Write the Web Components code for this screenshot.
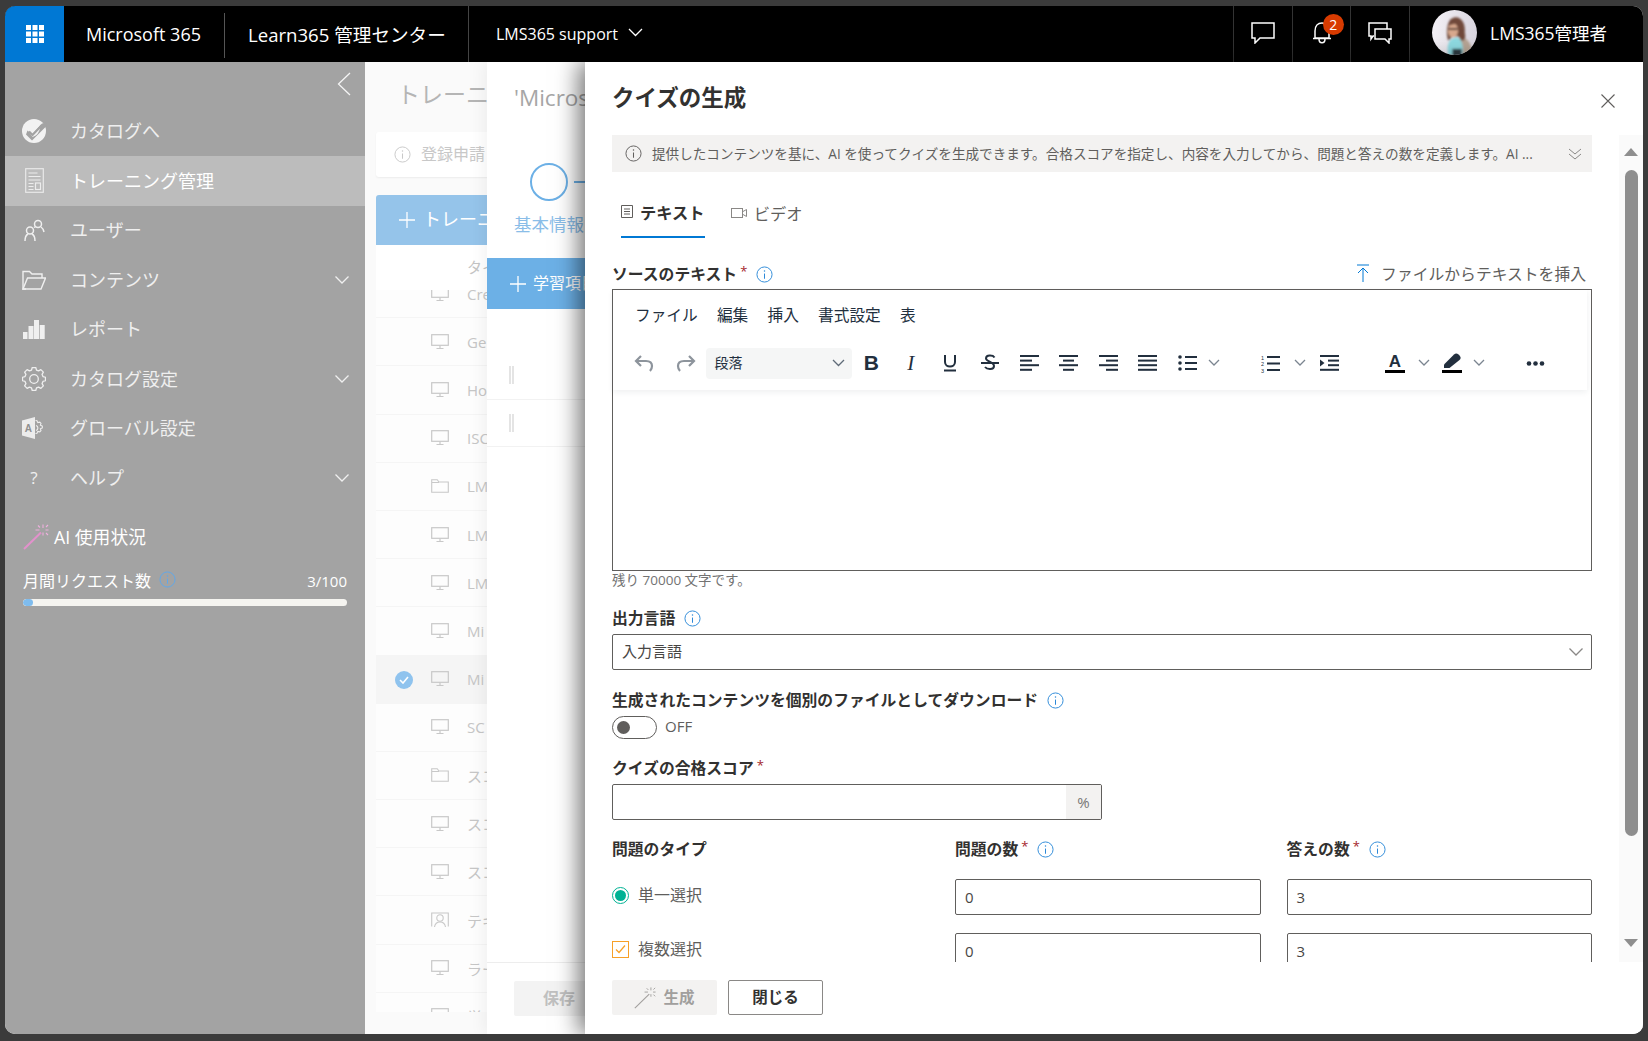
<!DOCTYPE html>
<html lang="ja"><head><meta charset="utf-8"><title>クイズの生成</title>
<style>
html,body{margin:0;padding:0;background:#3b3b3b}
body{font-family:"Open Sans","Noto Sans CJK JP",sans-serif}
</style></head><body>
<lms-app></lms-app>
<script>
const gear=(c,r1,r2,n)=>{let d='';for(let i=0;i<n;i++){const a=i*2*Math.PI/n,w=Math.PI/n*.55;const p=[[a-w*1.25,r1],[a-w*.7,r2],[a+w*.7,r2],[a+w*1.25,r1]];p.forEach((q,j)=>{d+=(i==0&&j==0?'M':'L')+(c+q[1]*Math.cos(q[0])).toFixed(2)+' '+(c+q[1]*Math.sin(q[0])).toFixed(2)})}return d+'Z'};
const svg=(w,h,vb,body,extra='')=>`<svg width="${w}" height="${h}" viewBox="${vb}" fill="none" stroke="currentColor" ${extra}>${body}</svg>`;
const ICONS={
 check:svg(26,26,'0 0 26 26',`<circle cx="13" cy="13" r="12" fill="#f2f2f2" stroke="none"/><path d="M6.500 12.500l4.500 4 10-11 5-1-1 4-14 14-6-6z" fill="#a3a3a3" stroke="none"/><path d="M8 14l3.500 3L19 9.500c-.5 4-2.500 8-7.500 9.500" fill="#f2f2f2" stroke="none"/><path d="M8 13.500l3.500 3.500L21 7" stroke="#a3a3a3" stroke-width="2.200"/>`),
 doc:svg(19,25,'0 0 19 25',`<rect x=".7" y=".7" width="17.600" height="23.600" stroke="#e8e8e8" stroke-width="1.200"/><path d="M3.500 5h9M3.500 8.500h12M3.500 12h12M3.500 15.500h5M3.500 18.500h5M3.500 21.500h5" stroke="#ececec" stroke-width="1.100"/><rect x="10.500" y="15" width="5" height="6.500" stroke="#ececec" stroke-width="1.200"/>`),
 users:svg(22,23,'0 0 22 23',`<g stroke="#f0f0f0" stroke-width="1.500"><circle cx="15" cy="5" r="3.500"/><circle cx="7" cy="11.500" r="3.500"/><path d="M18 8c1.500 1 2.500 2.500 3 5M11 8.500c.5-.5 1-.5 1.500-.5M2 22c0-3.500 1-6 3-7M12 22c0-3.500-1-6-3-7"/></g>`),
 folder:svg(24,20,'0 0 24 20',`<path d="M4 19H1V1.500h6.500L10 4h10v4" stroke-width="1.400"/><path d="M1 19L5.500 8h18L19 19z" stroke-width="1.400"/>`),
 bars:svg(22,20,'0 0 22 20',`<g fill="#f0f0f0" stroke="none"><rect x="0" y="13" width="4.500" height="7"/><rect x="5.500" y="7" width="5" height="13"/><rect x="11" y="1" width="5" height="19"/><rect x="16.700" y="6" width="5" height="14"/></g>`),
 gear:svg(24,24,'0 0 24 24',`<path d="${gear(12,9.300,11.600,8)}" stroke-width="1.300" stroke-linejoin="round"/><circle cx="12" cy="12" r="4.300" stroke-width="1.300"/>`),
 global:svg(24,22,'0 0 24 22',`<path d="M0 3.500L13 0v22L0 18.500z" fill="#ececec" stroke="none"/><text x="2.800" y="15" font-size="10" font-weight="700" fill="#8f8f8f" stroke="none" font-family="Liberation Sans">A</text><path d="M13.500 3.500l1.500.3.800 1.800 2-.5 1.200 1.200-.6 1.900 1.900.8v2l-1.900.8.600 1.900-1.200 1.200-2-.5-.8 1.800-1.500.3" stroke-width="1.100"/><path d="M14 8.500a2.600 2.600 0 0 1 0 5" stroke-width="1.100"/>`),
 help:`<span style="font:400 17px 'Open Sans',sans-serif;color:#f0f0f0">?</span>`,
 chev:svg(16,10,'0 0 16 10',`<path d="M1.500 1.500L8 8l6.500-6.500" stroke-width="1.300"/>`),
 wand:(c,s,w,sw=1.700)=>svg(w,w,'0 0 26 26',`<path d="M1 25L18 8.500" stroke="${c}" stroke-width="${sw}"/><path d="M20 .5v3.500M20 8.500v3M12.500 6h4M22.500 6h3M15 1.500l2 2M25 1l-2 2M23 9l2 2" stroke="${s}" stroke-width="1.100"/>`),
 info:(c='#2b88d8',s=17)=>svg(s,s,'0 0 18 18',`<circle cx="9" cy="9" r="8" stroke="${c}" stroke-width="1"/><path d="M9 8v5.500" stroke="${c}" stroke-width="1.100"/><circle cx="9" cy="5.300" r=".8" fill="${c}" stroke="none"/>`),
 pc:svg(18,16,'0 0 18 16',`<rect x=".7" y=".7" width="16.600" height="10.600" stroke-width="1.200"/><path d="M9 11.500v3M5.500 14.500h7" stroke-width="1.200"/>`),
 fold:svg(18,14,'0 0 18 14',`<path d="M.7 13.300V.7h5.500l1.800 2.300h9.300v10.300zM.7 3.500h7.300" stroke-width="1.100"/>`),
 person:svg(18,16,'0 0 18 16',`<path d="M3 1H.7v13.500M15 1h2.300v13.500M3 1h12" stroke-width="1.100"/><circle cx="9" cy="6" r="3.200" stroke-width="1.100"/><path d="M3.500 15c.5-3 2.500-5 5.500-5s5 2 5.500 5" stroke-width="1.100"/>`)
};
class Base extends HTMLElement{
 connectedCallback(){if(this.shadowRoot)return;this.attachShadow({mode:'open'}).innerHTML=this.render()}
 attr(n,d=''){return this.getAttribute(n)??d}
}
const d=(n,c)=>customElements.define(n,c);

class LmsApp extends Base{render(){return `<style>
:host{display:block;width:1648px;height:1041px;box-sizing:border-box;padding:6px 5px 7px 5px;background:#3b3b3b;font-family:"Open Sans","Noto Sans CJK JP",sans-serif}
.win{position:relative;width:100%;height:100%;border-radius:10px;overflow:hidden;display:flex;flex-direction:column;background:#fff}
.main{flex:1;min-height:0;display:flex}
</style><div class="win"><lms-topbar></lms-topbar><div class="main"><lms-sidenav></lms-sidenav><lms-training></lms-training></div><lms-wizard></lms-wizard><lms-quiz></lms-quiz></div>`}}

class LmsTopbar extends Base{render(){return `<style>
:host{display:flex;height:56px;background:#000;color:#fff;flex:none;font-size:18px;align-items:stretch}
.tile{width:59px;background:#0078d4;display:flex;align-items:center;justify-content:center}
.tile svg{display:block}
.it{display:flex;align-items:center;white-space:nowrap;box-sizing:border-box}
.b{width:161px;padding-left:22px;position:relative}
.b:after{content:"";position:absolute;right:0;top:7px;bottom:4px;width:1px;background:#555}
.l{width:244px;padding-left:23px;border-right:1px solid #444;font-size:18.600px;padding-bottom:2px}
.o{padding-left:27px;font-size:16px}
.o svg{margin-left:10px;margin-top:-3px}
.sp{flex:1}
.c{width:58.700px;border-left:1px solid #333;justify-content:center;position:relative;padding-bottom:3px}
.badge{position:absolute;left:30px;top:8px;width:21px;height:21px;border-radius:50%;background:#d83b01;font-size:14px;display:flex;align-items:center;justify-content:center;line-height:1}
.u{width:233.900px;border-left:1px solid #333;padding-left:22px;gap:13px;font-size:17.500px;padding-bottom:3px}
</style>
<div class="tile"><svg width="18" height="18" viewBox="0 0 18 18" fill="#fff"><rect width="5" height="5"/><rect x="6.500" width="5" height="5"/><rect x="13" width="5" height="5"/><rect y="6.500" width="5" height="5"/><rect x="6.500" y="6.500" width="5" height="5"/><rect x="13" y="6.500" width="5" height="5"/><rect y="13" width="5" height="5"/><rect x="6.500" y="13" width="5" height="5"/><rect x="13" y="13" width="5" height="5"/></svg></div>
<div class="it b">Microsoft 365</div><div class="it l">Learn365 管理センター</div>
<div class="it o">LMS365 support<svg width="15" height="9" viewBox="0 0 15 9" fill="none" stroke="#fff" stroke-width="1.300"><path d="M1 1l6.500 6.500L14 1"/></svg></div><div class="sp"></div>
<div class="it c"><svg width="24" height="22" viewBox="0 0 24 22" fill="none" stroke="#fff" stroke-width="1.500"><path d="M1 1h22v15H9l-5 5v-5H1z"/></svg></div>
<div class="it c"><svg width="20" height="23" viewBox="0 0 20 23" fill="none" stroke="#fff" stroke-width="1.500"><path d="M3 17V10c0-5 3-8 7-8s7 3 7 8v7zM1 17.500h18M7 18c0 5 6 5 6 0"/></svg><span class="badge">2</span></div>
<div class="it c"><svg width="24" height="22" viewBox="0 0 24 22" fill="none" stroke="#fff" stroke-width="1.500"><path d="M6 14H5l-2 3v-3H1V1h18v6"/><path d="M7 7h16v10h-2v4l-4-4H7z" fill="#000"/></svg></div>
<div class="it u"><svg width="45" height="45" viewBox="0 0 44 44"><defs><clipPath id="av"><circle cx="22" cy="22" r="22"/></clipPath><filter id="bl" x="-20%" y="-20%" width="140%" height="140%"><feGaussianBlur stdDeviation="1"/></filter><linearGradient id="ag" x1="0" y1="0" x2="1" y2="0"><stop offset="0" stop-color="#f4f1f6"/><stop offset="1" stop-color="#d9d5df"/></linearGradient></defs><g clip-path="url(#av)"><rect width="44" height="44" fill="url(#ag)"/><g filter="url(#bl)"><path d="M26 44V28c5-3 12 0 14 16z" fill="#b7a595"/><path d="M16 44c-2-8 0-16 7-17 6 0 8 8 7 17z" fill="#8fdbe3"/><path d="M16 30c-3-9-1-23 7-23 7 0 10 8 9 15 1 4 1 8-3 8l-3-4h-6z" fill="#714a3b"/><ellipse cx="20.500" cy="20" rx="5" ry="7" fill="#d9a98e"/><path d="M16 18.500h9" stroke="#2e2320" stroke-width="1.600"/><path d="M16 15c3 0 8-2 10-3l-2-3h-6z" fill="#714a3b"/><rect x="20" y="38" width="9" height="7" fill="#2f3a42"/></g></g></svg><span>LMS365管理者</span></div>`}}

class LmsNavItem extends Base{render(){const ic=ICONS[this.attr('icon')];return `<style>
:host{display:flex;align-items:center;height:49.500px;color:#efefef;font-size:18px;box-sizing:border-box;position:relative}
:host([active]){background:#bcbcbc;color:#fff}
.i{width:60px;margin-left:9px;display:flex;justify-content:center;flex:none;box-sizing:border-box;padding-right:20px}
.t{flex:1;margin-left:-4px;padding-bottom:2px}
.c{margin-right:15px;display:flex;color:#f0f0f0}
</style><span class="i">${ic}</span><span class="t"><slot></slot></span>${this.hasAttribute('chevron')?`<span class="c">${ICONS.chev}</span>`:''}`}}

class LmsSidenav extends Base{render(){return `<style>
:host{display:block;width:360px;flex:none;background:#a3a3a3;color:#fff}
.top{height:44.500px;display:flex;justify-content:flex-end;align-items:center;padding-right:14px;color:#f4f4f4}
.ai{display:flex;align-items:center;gap:5px;margin:19px 0 0 18px;font-size:17.800px;color:#fff;height:30px}
.ai span{padding-bottom:2px}
.m{display:flex;align-items:center;margin:16px 18px 0 18px;font-size:16px;color:#fff;height:24px}
.m span{margin-right:8px}.m b{margin-left:auto;font-weight:400;font-size:15px;padding-top:3px}
.bar{margin:7px 18px 0 18px;height:7px;border-radius:4px;background:#f5f4f0;overflow:hidden}
.bar i{display:block;width:10px;height:100%;background:#7fbcee;border-radius:4px}
svg{display:block}
</style><div class="top"><svg width="14" height="24" viewBox="0 0 14 24" fill="none" stroke="currentColor" stroke-width="1.300"><path d="M13 1L1.500 12 13 23"/></svg></div>
<lms-nav-item icon="check">カタログへ</lms-nav-item>
<lms-nav-item icon="doc" active>トレーニング管理</lms-nav-item>
<lms-nav-item icon="users">ユーザー</lms-nav-item>
<lms-nav-item icon="folder" chevron>コンテンツ</lms-nav-item>
<lms-nav-item icon="bars">レポート</lms-nav-item>
<lms-nav-item icon="gear" chevron>カタログ設定</lms-nav-item>
<lms-nav-item icon="global">グローバル設定</lms-nav-item>
<lms-nav-item icon="help" chevron>ヘルプ</lms-nav-item>
<div class="ai">${ICONS.wand('#e391cc','#eeb0dd',26,2)}<span>AI 使用状況</span></div>
<div class="m"><span>月間リクエスト数</span>${ICONS.info('#5ea8ec',17)}<b>3/100</b></div>
<div class="bar"><i></i></div>`}}

class LmsTraining extends Base{render(){
 const rows=[['pc','Cre'],['pc','Ge'],['pc','Ho'],['pc','ISC'],['fold','LM'],['pc','LM'],['pc','LM'],['pc','Mi'],['pc','Mi',1],['pc','SC'],['fold','スコ'],['pc','スコ'],['pc','スコ'],['person','テキ'],['pc','ラー'],['pc','学']];
 return `<style>
:host{display:block;flex:1;background:#fafafa;color:#bcbcbc;padding-left:11px;overflow:hidden;white-space:nowrap;box-sizing:border-box}
h1{font-size:23px;font-weight:400;margin:0;padding:19px 0 0 21px;height:50px;box-sizing:border-box;line-height:26px;color:#b5b5b5}
.card{height:45px;background:#fff;margin-top:20px;display:flex;align-items:center;padding-left:18px;gap:10px;font-size:16px;color:#c8c8c8;box-shadow:0 1px 2px rgba(0,0,0,.06);border-radius:3px 0 0 3px}
.card span{padding-bottom:4px}
.btn{height:50px;background:#95c4ea;margin-top:18px;color:#fff;display:flex;align-items:center;padding-left:23px;gap:8px;font-size:18px;border-radius:3px 0 0 0}
.btn svg{display:block}.btn span{padding-bottom:4px}
.head{height:45px;background:#fff;padding-left:91px;font-size:15px;color:#c4c4c4;line-height:44px}
.list{height:722px;overflow:hidden;background:#fff}
.in{margin-top:-20px}
.r{height:48.200px;box-sizing:border-box;border-bottom:1px solid #f5f5f5;display:flex;align-items:center;font-size:15px;position:relative;padding-left:55px;color:#c6c6c6;background:#fdfdfd}
.r.s{background:#f5f5f5}
.r span.ic{width:36px;display:flex;color:#c8c8c8}
.ck{position:absolute;left:19px;top:15px;width:18px;height:18px;border-radius:50%;background:#8fc3ee;display:flex;align-items:center;justify-content:center}
</style>
<h1>トレーニング管理</h1>
<div class="card">${ICONS.info('#c8c8c8',17)}<span>登録申請</span></div>
<div class="btn"><svg width="16" height="16" viewBox="0 0 16 16" stroke="#fff" stroke-width="1.300"><path d="M8 0v16M0 8h16"/></svg><span>トレーニング</span></div>
<div class="head">タイトル</div>
<div class="list"><div class="in">${rows.map(r=>`<div class="r ${r[2]?'s':''}">${r[2]?`<span class="ck"><svg width="10" height="8" viewBox="0 0 10 8" fill="none" stroke="#fff" stroke-width="1.600"><path d="M1 4l3 3 5-6"/></svg></span>`:''}<span class="ic">${ICONS[r[0]]}</span>${r[1]}</div>`).join('')}</div></div>`}}

class LmsWizard extends Base{render(){return `<style>
:host{position:absolute;left:482px;top:56px;bottom:0;width:200px;background:#fff;color:#aaa;display:flex;flex-direction:column;box-shadow:-4px 0 14px rgba(0,0,0,.05);white-space:nowrap;overflow:hidden}
h1{font-size:22.500px;font-weight:400;margin:0;padding:23px 0 0 27px;height:101px;box-sizing:border-box;color:#a6a6a6;line-height:26px;flex:none}
.st{display:flex;align-items:center;padding-left:43px;height:38px;flex:none}
.st i{display:block;width:34px;height:34px;border:2px solid #6cb0e6;border-radius:50%}
.st u{display:block;width:30px;height:2px;background:#6cb0e6;margin-left:6px}
.lb{padding-left:27px;font-size:17.500px;color:#8abde8;margin-top:11px;flex:none;line-height:24px}
.btn{height:51px;background:#6cb0e6;margin-top:22px;color:#fff;display:flex;align-items:center;padding-left:23px;gap:7px;font-size:16px;flex:none}
.btn span{padding-bottom:3px}
.h{height:47.500px;border-bottom:1px solid #f2f2f2;padding-left:22px;display:flex;align-items:center;flex:none;box-sizing:border-box}
.h:before{content:"";width:5px;height:18px;border-left:2px solid #e4e4e4;border-right:2px solid #e4e4e4;box-sizing:border-box}
.f1{height:43px;flex:none}
.sp{flex:1}
.f{height:72px;border-top:1px solid #ededed;padding:18px 0 0 27px;box-sizing:border-box;flex:none}
.f span{display:flex;width:120px;height:35px;background:#f3f3f3;color:#c0c0c0;font-weight:700;font-size:16px;align-items:center;padding:0 0 3px 29px;box-sizing:border-box;border-radius:2px}
</style><h1>'Microsoft</h1>
<div class="st"><i></i><u></u></div><div class="lb">基本情報</div>
<div class="btn"><svg width="16" height="16" viewBox="0 0 16 16" stroke="#fff" stroke-width="1.300"><path d="M8 0v16M0 8h16"/></svg><span>学習項目</span></div>
<div class="f1"></div><div class="h"></div><div class="h"></div><div class="sp"></div>
<div class="f"><span>保存</span></div>`}}

class LmsLabel extends Base{render(){return `<style>
:host{display:flex;align-items:center;height:24px;font-size:15.800px;font-weight:700;color:#323130;white-space:nowrap}
.s{color:#a4262c;font-size:13px;font-weight:400;margin-left:3px;align-self:flex-start;line-height:20px}
.i{display:flex;margin-left:9px;margin-top:2px}
</style><slot></slot>${this.hasAttribute('req')?'<span class="s">*</span>':''}${this.hasAttribute('info')?`<span class="i">${ICONS.info()}</span>`:''}`}}

class LmsInput extends Base{render(){return `<style>
:host{display:flex;height:36px;box-sizing:border-box;border:1px solid #605e5c;border-radius:2px;align-items:center;font-size:15px;color:#484644;background:#fff;overflow:hidden}
.v{flex:1;padding-left:9px}
:host([select]) .v{padding-bottom:4px}
.sf{width:35px;height:100%;background:#f3f2f1;color:#797775;display:flex;align-items:center;justify-content:center;font-size:15px}
.c{display:flex;margin-right:7px;color:#8a8886}
</style><span class="v"><slot></slot></span>${this.hasAttribute('suffix')?`<span class="sf">${this.attr('suffix')}</span>`:''}${this.hasAttribute('select')?`<span class="c">${ICONS.chev}</span>`:''}`}}

class LmsEditor extends Base{render(){
 const col='#222f3e';
 const lines=(a)=>`<svg width="19" height="16" viewBox="0 0 19 16" fill="${col}" stroke="none">${a.map((r,i)=>`<rect x="${r[0]}" y="${i*4.600}" width="${r[1]}" height="2"/>`).join('')}</svg>`;
 const chv=(m=0)=>`<span class="ch" style="margin-left:${m}px"><svg width="12" height="8" viewBox="0 0 12 8" fill="none" stroke="#7b8590" stroke-width="1.300"><path d="M1 1l5 5 5-5"/></svg></span>`;
 const b=(x,st='')=>`<span class="b" style="${st}">${x}</span>`;
 const ltr=(t,s,f='Liberation Sans')=>`<span style="font:${s} '${f}',sans-serif;color:${col}">${t}</span>`;
 return `<style>
:host{display:flex;flex-direction:column;height:282px;box-sizing:border-box;border:1px solid #605e5c;background:#fff}
.top{height:100px;box-shadow:0 2px 6px rgba(34,47,62,.08);display:block;flex:none;margin-right:4px}
.mb{display:flex;height:54px;box-sizing:border-box;align-items:center;gap:19.200px;padding:0 0 6px 22px;font-size:15.700px;color:#222f3e}
.tb{display:flex;align-items:center;height:38px;padding-left:11px}
.b{width:39.500px;height:38px;display:flex;align-items:center;justify-content:center;flex:none}
.sel{width:146px;height:31px;background:#f5f6f6;border-radius:4px;display:flex;align-items:center;justify-content:space-between;padding:0 7px 3px 9px;box-sizing:border-box;font-size:14px;color:#222f3e;flex:none}
.sel svg{margin-top:3px}
.ch{width:14px;display:flex;justify-content:center;flex:none}
</style><div class="top"><div class="mb"><span>ファイル</span><span>編集</span><span>挿入</span><span>書式設定</span><span>表</span></div>
<div class="tb">
${b(`<svg width="20" height="20" viewBox="0 0 20 20" fill="none" stroke="#8d949c" stroke-width="2.200"><path d="M7 3L2 8l5 5M2 8h10c4 0 6 2 6 5s-1 4-2 5"/></svg>`)}
<span style="width:2.500px;flex:none"></span>
${b(`<svg width="20" height="20" viewBox="0 0 20 20" fill="none" stroke="#8d949c" stroke-width="2.200"><path d="M13 3l5 5-5 5M18 8H8c-4 0-6 2-6 5s1 4 2 5"/></svg>`)}
<span class="sel">段落<svg width="13" height="8" viewBox="0 0 13 8" fill="none" stroke="#5f6b78" stroke-width="1.300"><path d="M1 1l5.500 5.500L12 1"/></svg></span>
${b(ltr('B','700 21px'))}
${b(ltr('I','italic 400 21px','Liberation Serif'))}
${b(`<svg width="16" height="18" viewBox="0 0 16 18" fill="none" stroke="${col}" stroke-width="2"><path d="M3 1v7c0 6 10 6 10 0V1M2 16.500h12"/></svg>`)}
${b(`<svg width="20" height="20" viewBox="0 0 20 20" fill="none" stroke="${col}" stroke-width="2"><path d="M1 10h18M14.500 4.500C13 2 6 1.500 6 5.500c0 3 8 3.500 8 7.500 0 4-7 3.500-9 1"/></svg>`)}
${b(lines([[0,19],[0,12],[0,19],[0,12]]))}${b(lines([[0,19],[4,11],[0,19],[4,11]]))}${b(lines([[0,19],[7,12],[0,19],[7,12]]))}${b(lines([[0,19],[0,19],[0,19],[0,19]]))}
${b(`<svg width="19" height="16" viewBox="0 0 19 16" fill="${col}"><circle cx="2" cy="2" r="1.800"/><circle cx="2" cy="8" r="1.800"/><circle cx="2" cy="14" r="1.800"/><rect x="7" y="1" width="12" height="2"/><rect x="7" y="7" width="12" height="2"/><rect x="7" y="13" width="12" height="2"/></svg>`)}${chv()}
<span style="width:30px;flex:none"></span>
${b(`<svg width="19" height="19" viewBox="0 0 19 19" fill="${col}"><text x="0" y="5.500" font-size="5.500" font-family="Liberation Sans">1</text><text x="0" y="12" font-size="5.500" font-family="Liberation Sans">2</text><text x="0" y="18.500" font-size="5.500" font-family="Liberation Sans">3</text><rect x="6" y="2" width="13" height="2"/><rect x="6" y="8.500" width="13" height="2"/><rect x="6" y="15" width="13" height="2"/></svg>`)}${chv(2)}
<span style="width:3px;flex:none"></span>
${b(`<svg width="19" height="16" viewBox="0 0 19 16" fill="${col}"><rect width="19" height="2"/><rect x="8" y="4.600" width="11" height="2"/><rect x="8" y="9.200" width="11" height="2"/><rect y="13.800" width="19" height="2"/><path d="M0 4.500l4.500 3.500L0 11.500z"/></svg>`)}
<span style="width:26px;flex:none"></span>
${b(`<svg width="20" height="22" viewBox="0 0 20 22"><text x="10" y="15" text-anchor="middle" font-size="17" font-weight="700" font-family="Liberation Sans" fill="${col}">A</text><rect y="18" width="20" height="3" fill="#000"/></svg>`)}${chv(2)}
<span style="width:2px;flex:none"></span>
${b(`<svg width="20" height="22" viewBox="0 0 20 22"><path d="M2 16V12.500L12 2.500c1.500-1.500 3-1.500 4.500 0l1 1c1.500 1.500 1.500 3 0 4.500L7.500 16z" fill="${col}"/><rect y="18" width="20" height="3" fill="#000"/></svg>`)}${chv()}
<span style="width:30px;flex:none"></span>
${b(`<svg width="19" height="5" viewBox="0 0 19 5" fill="${col}"><circle cx="3" cy="2.500" r="2.300"/><circle cx="9.500" cy="2.500" r="2.300"/><circle cx="16" cy="2.500" r="2.300"/></svg>`)}
</div></div>`}}

class LmsScrollbar extends Base{render(){return `<style>
:host{display:flex;flex-direction:column;align-items:center;width:24px;flex:none;background:#fafafa;box-sizing:border-box;padding:13px 0 15px}
.u,.v{width:0;height:0;border-left:7.500px solid transparent;border-right:7.500px solid transparent}
.u{border-bottom:8px solid #8e8e8e}.v{border-top:8px solid #8e8e8e;margin-top:auto}
.th{width:13px;height:666px;margin-top:14px;background:#8e8e8e;border-radius:7px}
</style><div class="u"></div><div class="th"></div><div class="v"></div>`}}

class LmsQuiz extends Base{render(){return `<style>
:host{position:absolute;left:580px;top:56px;right:0;bottom:0;background:#fff;display:flex;flex-direction:column;color:#323130;box-shadow:-6px 0 22px rgba(0,0,0,.55);white-space:nowrap}
header{height:73px;flex:none;display:flex;justify-content:space-between;align-items:flex-start;padding:22px 28px 0 27px;box-sizing:border-box}
h1{font-size:22.500px;font-weight:700;margin:0;line-height:28px;color:#323130}
.x{margin:10px 0 0 0;display:block}
.body{flex:1;min-height:0;display:flex}
.scroll{flex:1;min-width:0;overflow:hidden;padding:0 27px}
.info{height:37px;background:#f3f2f1;display:flex;align-items:center;padding-left:13px;font-size:13.600px;color:#605e5c}
.info .t{margin-left:10px;flex:1;overflow:hidden;padding-bottom:2px}
.info svg{display:block;flex:none}
.tabs{display:flex;height:48px;margin-top:18px;gap:26px;padding-left:9px}
.tab{height:100%;display:flex;align-items:center;gap:7px;font-size:16.300px;padding:0 0 3px 0;box-sizing:border-box;color:#605e5c}
.tab.a{font-weight:700;color:#323130;border-bottom:2px solid #0078d4}
.srow{display:flex;justify-content:space-between;margin-top:23px;height:28px;align-items:flex-start}
.link{font-size:15.800px;color:#605e5c;display:flex;align-items:center;gap:11px;margin-right:6px;height:24px}
.cnt{font-size:13.500px;color:#737373;height:15px;line-height:14px;margin-top:2px}
.lab{margin-top:17px;margin-bottom:4px}
.tog{display:flex;align-items:center;gap:8px;height:24px;font-size:15px;color:#605e5c;margin-top:4px}
.tog span{padding-bottom:2px}
.tog i{display:block;width:45px;height:23px;border:1px solid #605e5c;border-radius:12px;box-sizing:border-box;position:relative}
.tog i:after{content:"";position:absolute;left:4px;top:4px;width:13px;height:13px;border-radius:50%;background:#605e5c}
.score{width:490px}
.grid{display:grid;grid-template-columns:317px 1fr 1fr;column-gap:26px;grid-auto-rows:auto;margin-top:16px}
.gl{margin-bottom:19px}
.opt{display:flex;align-items:center;gap:9px;font-size:16px;color:#605e5c;height:36px;padding-bottom:4px;box-sizing:border-box}
.opt b{font-weight:400;padding-bottom:2px}
.gi{margin-bottom:18px}
.rad{width:17px;height:17px;border:1.500px solid #00b294;border-radius:50%;box-sizing:border-box;display:flex;align-items:center;justify-content:center;flex:none}
.rad:after{content:"";width:11px;height:11px;background:#00b294;border-radius:50%}
.cb{width:17px;height:17px;border:1.500px solid #f7a028;box-sizing:border-box;display:flex;align-items:center;justify-content:center;flex:none}
footer{height:72px;flex:none;display:flex;gap:11px;padding:18px 0 0 27px;box-sizing:border-box}
.bt{height:35px;display:flex;align-items:center;justify-content:center;font-size:15.500px;font-weight:700;box-sizing:border-box;border-radius:2px}
.bt span{padding-bottom:2px}
.gen{width:105px;background:#f3f2f1;color:#a19f9d;gap:7px}
.cl{width:95px;border:1px solid #8a8886;color:#323130}
</style>
<header><h1>クイズの生成</h1><svg class="x" width="14" height="14" viewBox="0 0 14 14" fill="none" stroke="#605e5c" stroke-width="1.100"><path d="M.5.500l13 13M13.500.500l-13 13"/></svg></header>
<div class="body"><div class="scroll">
<div class="info">${ICONS.info('#605e5c',17)}<span class="t">提供したコンテンツを基に、AI を使ってクイズを生成できます。合格スコアを指定し、内容を入力してから、問題と答えの数を定義します。AI ...</span><svg width="14" height="14" viewBox="0 0 14 14" fill="none" stroke="#8a8886" stroke-width="1" style="margin-right:10px"><path d="M1 2l6 5 6-5M1 7l6 5 6-5"/></svg></div>
<div class="tabs"><div class="tab a"><svg width="12" height="13" viewBox="0 0 12 13" fill="none" stroke="#605e5c"><path d="M.5.500h11v12H.5zM3 4h6M3 6.500h6M3 9h6"/></svg>テキスト</div><div class="tab"><svg width="16" height="10" viewBox="0 0 16 10" fill="none" stroke="#8a8886"><rect x=".5" y=".5" width="11" height="9"/><path d="M12 3.500L15.500 1.500v7L12 6.500"/></svg>ビデオ</div></div>
<div class="srow"><lms-label req info>ソースのテキスト</lms-label><div class="link"><svg width="14" height="18" viewBox="0 0 14 18" fill="none" stroke="#0078d4"><path d="M1 1h12M7 18V4M2 9l5-5 5 5"/></svg>ファイルからテキストを挿入</div></div>
<lms-editor></lms-editor>
<div class="cnt">残り 70000 文字です。</div>
<lms-label info style="margin-top:17px;margin-bottom:5px">出力言語</lms-label>
<lms-input select>入力言語</lms-input>
<lms-label class="lab" info>生成されたコンテンツを個別のファイルとしてダウンロード</lms-label>
<div class="tog"><i></i><span>OFF</span></div>
<lms-label class="lab" style="margin-top:16px;margin-bottom:5px" req>クイズの合格スコア</lms-label>
<lms-input class="score" suffix="%"></lms-input>
<div class="grid">
<lms-label class="gl">問題のタイプ</lms-label><lms-label class="gl" req info>問題の数</lms-label><lms-label class="gl" req info>答えの数</lms-label>
<div class="opt"><span class="rad"></span><b>単一選択</b></div><lms-input class="gi">0</lms-input><lms-input class="gi">3</lms-input>
<div class="opt"><span class="cb"><svg width="11" height="9" viewBox="0 0 11 9" fill="none" stroke="#f7a028" stroke-width="1.200"><path d="M1 4.500l3 3 6-7"/></svg></span><b>複数選択</b></div><lms-input>0</lms-input><lms-input>3</lms-input>
</div>
</div><lms-scrollbar></lms-scrollbar></div>
<footer><div class="bt gen">${ICONS.wand('#a19f9d','#a19f9d',22,1.300)}<span>生成</span></div><div class="bt cl"><span>閉じる</span></div></footer>`}}

d('lms-nav-item',LmsNavItem);d('lms-label',LmsLabel);d('lms-input',LmsInput);d('lms-editor',LmsEditor);d('lms-scrollbar',LmsScrollbar);
d('lms-topbar',LmsTopbar);d('lms-sidenav',LmsSidenav);d('lms-training',LmsTraining);d('lms-wizard',LmsWizard);d('lms-quiz',LmsQuiz);d('lms-app',LmsApp);
</script></body></html>
